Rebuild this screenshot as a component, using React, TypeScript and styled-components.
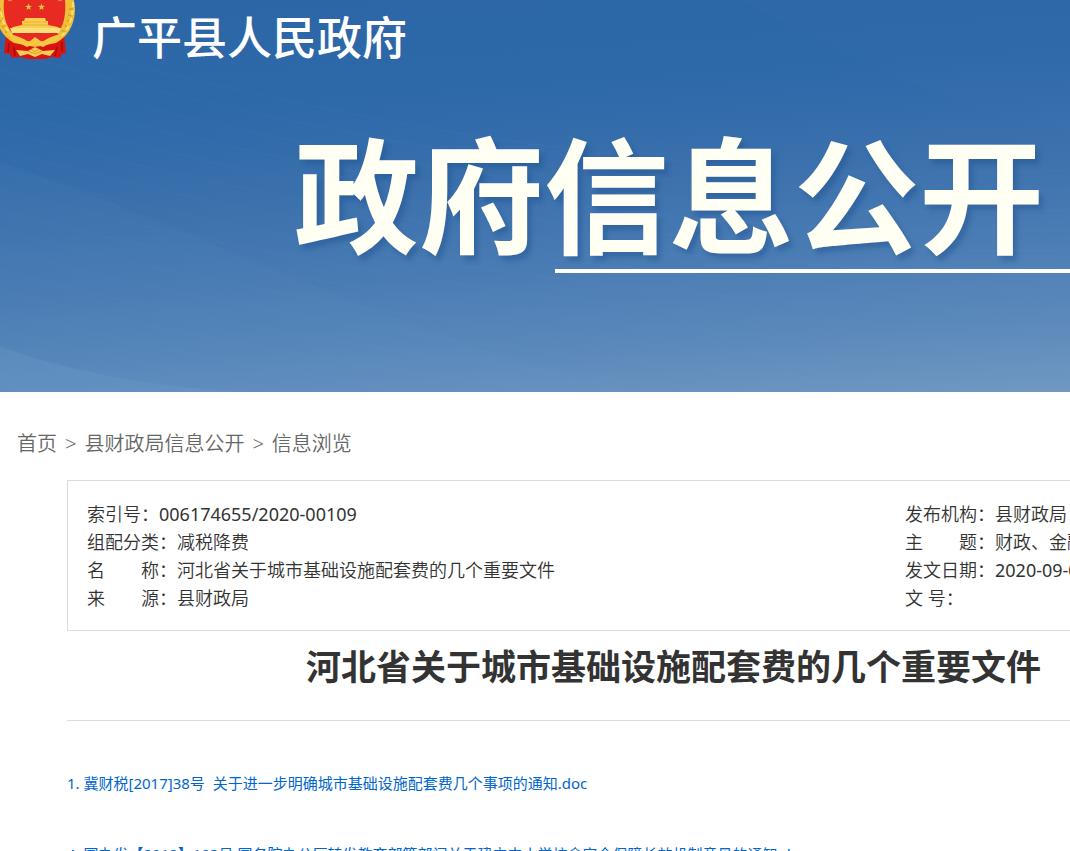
import React from "react";
import styled, { createGlobalStyle } from "styled-components";

const Global = createGlobalStyle`
  * { box-sizing: border-box; }
  html { scrollbar-width: none; overflow-x: hidden; }
  body {
    margin: 0;
    background: #fff;
    color: #333;
    font-family: "Noto Sans", "Noto Sans CJK SC", sans-serif;
    overflow-x: hidden;
  }
`;

const Banner = styled.header`
  position: relative;
  height: 392px;
  overflow: hidden;
  background: linear-gradient(176deg, #2c66a7 0%, #2d68a9 25%, #3a70ac 46%, #4a7cb4 66%, #5b89bb 84%, #7098c2 100%);
`;

const Waves = styled.svg`
  position: absolute;
  inset: 0;
  width: 100%;
  height: 100%;
`;

const Brand = styled.div`
  position: relative;
  display: flex;
  align-items: flex-start;
  gap: 16px;
  height: 115px;
`;

const Emblem = styled.svg`
  flex: none;
  width: 76px;
  height: 60px;
`;

const SiteName = styled.a`
  margin-top: 3px;
  color: #fff;
  font: 500 45px/66px "Noto Sans CJK SC", sans-serif;
  text-decoration: none;
  white-space: nowrap;
`;

const BannerTitle = styled.h1`
  position: relative;
  margin: 0;
  padding: 0 26px 4px 0;
  color: #fffff4;
  font: 700 125px/150px "Noto Sans CJK SC", sans-serif;
  text-align: right;
  text-shadow: 4px 5px 5px rgba(30, 82, 145, 0.45);
  white-space: nowrap;
`;

const Rule = styled.div`
  position: relative;
  height: 4px;
  margin-left: 555px;
  background: #fff;
`;

const Crumbs = styled.nav`
  display: flex;
  gap: 8px;
  padding: 37px 17px 21px;
  color: #666;
  font-size: 20px;
  line-height: 30px;
  font-weight: 350;
  white-space: nowrap;
`;

const CrumbLink = styled.a`
  color: inherit;
  text-decoration: none;
`;

const Main = styled.main`
  padding-left: 67px;
`;

const InfoBox = styled.section`
  display: grid;
  grid-template-columns: 1fr 165px;
  padding: 19px 0 18px 19px;
  border: 1px solid #dcdcdc;
  border-right: 0;
  font-size: 18px;
  line-height: 28px;
  font-weight: 350;
`;

const Fields = styled.dl`
  min-width: 0;
  margin: 0;
  overflow: hidden;
  white-space: pre;
`;

const Field = styled.div`
  display: flex;
  height: 28px;
`;

const Label = styled.dt`
  flex: none;
`;

const Value = styled.dd<{ $numeric: boolean }>`
  margin: 0;
  font-weight: ${(p) => (p.$numeric ? 400 : 350)};
`;

const DocTitle = styled.h2`
  margin: 0;
  padding: 9px 29px 27px 0;
  border-bottom: 1px solid #dcdcdc;
  font-size: 35px;
  line-height: 53px;
  font-weight: 700;
  text-align: right;
  white-space: nowrap;
`;

const Files = styled.div`
  display: flex;
  flex-direction: column;
  align-items: flex-start;
  gap: 45px;
  padding-top: 49px;
`;

const FileLink = styled.a`
  color: #0066cc;
  font-size: 15px;
  line-height: 26px;
  text-decoration: none;
  white-space: pre;
`;

const left = [
  ["索引号：", "006174655/2020-00109"],
  ["组配分类：", "减税降费"],
  ["名　　称：", "河北省关于城市基础设施配套费的几个重要文件"],
  ["来　　源：", "县财政局"],
];

const right = [
  ["发布机构：", "县财政局"],
  ["主　　题：", "财政、金融"],
  ["发文日期：", "2020-09-08"],
  ["文 号：", ""],
];

const files = [
  "1. 冀财税[2017]38号  关于进一步明确城市基础设施配套费几个事项的通知.doc",
  "4. 国办发【2012】103号 国务院办公厅转发教育部等部门关于建立中小学校舍安全保障长效机制意见的通知.doc",
];

const FieldList = ({ items }: { items: string[][] }) => (
  <Fields>
    {items.map(([label, value]) => (
      <Field key={label}>
        <Label>{label}</Label>
        <Value $numeric={/^\d/.test(value)}>{value}</Value>
      </Field>
    ))}
  </Fields>
);

const star = (x: number, y: number, r: number) => {
  const pts: string[] = [];
  for (let i = 0; i < 10; i++) {
    const a = (Math.PI / 5) * i - Math.PI / 2;
    const k = i % 2 ? r * 0.4 : r;
    pts.push(`${x + k * Math.cos(a)},${y + k * Math.sin(a)}`);
  }
  return <polygon points={pts.join(" ")} fill="#f0c63a" />;
};

const NationalEmblem = () => (
  <Emblem viewBox="0 0 76 60" aria-hidden="true">
    <path d="M6 34 L4 53 L10 54 L12 58 L20 57 L28 59 L45 59 L52 57 L60 58 L62 54 L66 53 L64 34Z" fill="#d9140f" />
    <path d="M9 43 L8 52 M14 47 L15 56 M57 47 L55 56 M62 42 L62 51" stroke="#9f0d0d" strokeWidth="1.5" />
    <path d="M36 -31 A39.500 41 0 0 1 75 10 Q74 33 56 43 L35 47 L14 43 Q-4 33 -4 10 A39.500 41 0 0 1 36 -31Z" fill="#efbf38" />
    <path d="M-1 8 Q0 30 16 39 M71 8 Q70 30 54 39" fill="none" stroke="#dba52a" strokeWidth="4" strokeDasharray="2 4" />
    <path d="M1 12 Q3 30 18 40 M73 2 Q73 28 58 39" fill="none" stroke="#fadf72" strokeWidth="2" strokeDasharray="5 3" />
    <path d="M4 0 H65 Q67 22 57 34 H13 Q2 22 4 0Z" fill="#e72a22" />
    {star(28.5, 7, 3.6)}
    {star(41.5, 7, 3.6)}
    {star(10, -1, 3)}
    {star(60, -1, 3)}
    <path d="M25 18 L45 18 L46 21 L48 21 L48 25 L58 27 L60 29 L11 29 L13 27 L22 25 L22 21 L24 21Z" fill="#f8cf50" />
    <path d="M24 22 H47 M22 25 H49" stroke="#e59b2c" strokeWidth="0.7" />
    <path d="M10 28 H61 L59 33 H12Z" fill="#fae07a" />
    <path d="M12 34 H59 L50 41 H20Z" fill="#e72a22" />
    <path d="M8 34 Q20 36 29 42 L35 37 L42 42 Q50 36 62 34 L58 40 Q49 43 43 47 L35 44 L27 47 Q20 43 12 40Z" fill="#f4c842" />
    <path d="M16 50 L28 51 L35 47 L43 51 L55 50 L50 56 L42 54 L35 57 L28 54 L20 56Z" fill="#f6ce55" />
    <path d="M28 51 L35 54 L42 51 M31 49 L35 52 L39 49" stroke="#dd8c20" strokeWidth="0.8" fill="none" />
  </Emblem>
);

const App = () => (
  <>
    <Global />
    <Banner>
      <Waves viewBox="0 0 1070 392" preserveAspectRatio="none" aria-hidden="true">
        <path d="M0 162 C180 220 400 340 640 392 H0Z" fill="#7fb0dc" opacity="0.05" />
        <path d="M0 346 C70 372 150 386 240 392 H0Z" fill="#8fc0e0" opacity="0.1" />
        <path d="M740 0 C850 60 960 110 1070 135 V0Z" fill="#6f9fd0" opacity="0.04" />
        <g fill="none" stroke="#a5c8ea" opacity="0.04">
          {Array.from({ length: 16 }, (_, i) => (
            <path key={i} d={`M0 ${30 + i * 20} C260 ${100 + i * 20} 620 ${190 + i * 17} 1070 ${170 + i * 20}`} />
          ))}
        </g>
      </Waves>
      <Brand>
        <NationalEmblem />
        <SiteName href="#">广平县人民政府</SiteName>
      </Brand>
      <BannerTitle>政府信息公开</BannerTitle>
      <Rule />
    </Banner>
    <Crumbs aria-label="breadcrumb">
      <CrumbLink href="#">首页</CrumbLink>
      <span>&gt;</span>
      <CrumbLink href="#">县财政局信息公开</CrumbLink>
      <span>&gt;</span>
      <CrumbLink href="#">信息浏览</CrumbLink>
    </Crumbs>
    <Main>
      <InfoBox>
        <FieldList items={left} />
        <FieldList items={right} />
      </InfoBox>
      <DocTitle>河北省关于城市基础设施配套费的几个重要文件</DocTitle>
      <Files>
        {files.map((name) => (
          <FileLink key={name} href="#">{name}</FileLink>
        ))}
      </Files>
    </Main>
  </>
);

export default App;
